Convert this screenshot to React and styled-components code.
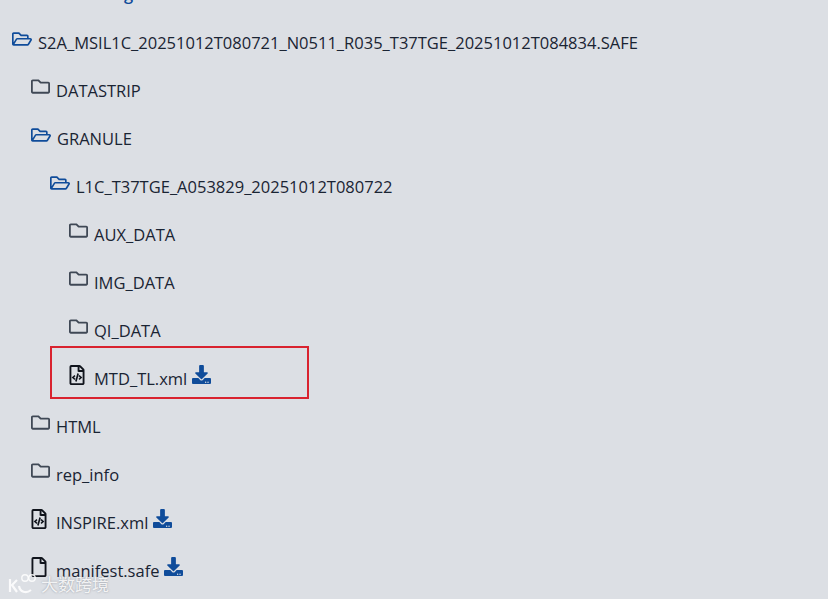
import React from "react";
import styled, { createGlobalStyle } from "styled-components";
import { FaRegFolder, FaRegFolderOpen, FaRegFileCode, FaRegFile, FaDownload } from "react-icons/fa";

const GlobalStyle = createGlobalStyle`
  html, body {
    margin: 0;
    padding: 0;
    height: 100%;
    overflow: hidden;
    background: #dcdfe4;
  }
`;

const Page = styled.div`
  position: relative;
  width: 828px;
  height: 599px;
  overflow: hidden;
  background: #dcdfe4;
  font-family: "Open Sans", "Noto Sans", sans-serif;
  font-size: 16.5px;
  color: #1a2433;
`;

const Tree = styled.ul`
  list-style: none;
  margin: -30px 0 0;
  padding: 0 0 0 12px;
`;

const Row = styled.li`
  display: flex;
  align-items: center;
  height: 48px;
  padding-left: ${(p) => p.$level * 19}px;
`;

const ParentLink = styled.a`
  margin-left: 6px;
  margin-top: -2px;
  font-weight: 600;
  color: #0f4c9a;
  white-space: nowrap;
`;

const Icon = styled.span`
  display: flex;
  flex: none;
  width: ${(p) => p.$width}px;
  margin-top: -7px;
  margin-left: ${(p) => (p.$file ? -2 : 0)}px;
  font-size: ${(p) => (p.$closed ? 19 : 20)}px;
  color: ${(p) => (p.$open ? "#0f4c9a" : p.$closed ? "#3f4855" : "#10141c")};
  svg { display: block; }
`;

const Name = styled.span`
  white-space: nowrap;
`;

const Download = styled.span`
  display: flex;
  margin-top: -7px;
  margin-left: 5px;
  font-size: 19px;
  color: #0f4c9a;
`;

const Highlight = styled.div`
  position: absolute;
  left: 50px;
  top: 346px;
  width: 255px;
  height: 49px;
  border: 2px solid #d9232f;
`;

const Watermark = styled.div`
  position: absolute;
  left: 8px;
  bottom: 4px;
  display: flex;
  align-items: center;
  gap: 3px;
  font-family: "Noto Sans CJK SC", sans-serif;
  font-size: 17px;
  line-height: 22px;
  color: rgba(255, 255, 255, 0.85);
  text-shadow: 0 0 2px rgba(90, 95, 105, 0.55);
`;

const items = [
  { level: 0, type: "open", name: "S2A_MSIL1C_20251012T080721_N0511_R035_T37TGE_20251012T084834.SAFE" },
  { level: 1, type: "folder", name: "DATASTRIP" },
  { level: 1, type: "open", name: "GRANULE" },
  { level: 2, type: "open", name: "L1C_T37TGE_A053829_20251012T080722" },
  { level: 3, type: "folder", name: "AUX_DATA" },
  { level: 3, type: "folder", name: "IMG_DATA" },
  { level: 3, type: "folder", name: "QI_DATA" },
  { level: 3, type: "code", name: "MTD_TL.xml" },
  { level: 1, type: "folder", name: "HTML" },
  { level: 1, type: "folder", name: "rep_info" },
  { level: 1, type: "code", name: "INSPIRE.xml" },
  { level: 1, type: "file", name: "manifest.safe" },
];

const icons = { open: FaRegFolderOpen, folder: FaRegFolder, code: FaRegFileCode, file: FaRegFile };

export default function App() {
  return (
    <Page>
      <GlobalStyle />
      <Tree>
        {/* scrolled away, only the tail of the g shows at the top edge */}
        <Row $level={0}>
          <ParentLink>Product listing</ParentLink>
        </Row>
        {items.map((item) => {
          const Glyph = icons[item.type];
          const isFile = item.type === "code" || item.type === "file";
          const isClosed = item.type === "folder";
          return (
            <Row key={item.name} $level={item.level}>
              <Icon
                $open={item.type === "open"}
                $closed={isClosed}
                $file={isFile}
                $width={isFile ? 27 : isClosed ? 25 : 26}
              >
                <Glyph />
              </Icon>
              <Name>{item.name}</Name>
              {isFile && (
                <Download>
                  <FaDownload />
                </Download>
              )}
            </Row>
          );
        })}
      </Tree>
      <Highlight />
      <Watermark>
        <svg width="30" height="22" viewBox="0 0 30 22" fill="none" stroke="rgba(255,255,255,0.85)" strokeWidth="2.2">
          <path d="M2 6v13M9 7l-5 5 5 7" />
          <path d="M11 13c1 6 7 8 12 4" />
          <circle cx="17" cy="5" r="3.2" strokeWidth="1.4" />
          <circle cx="24" cy="5" r="3.2" strokeWidth="1.4" />
        </svg>
        <span>大数跨境</span>
      </Watermark>
    </Page>
  );
}
